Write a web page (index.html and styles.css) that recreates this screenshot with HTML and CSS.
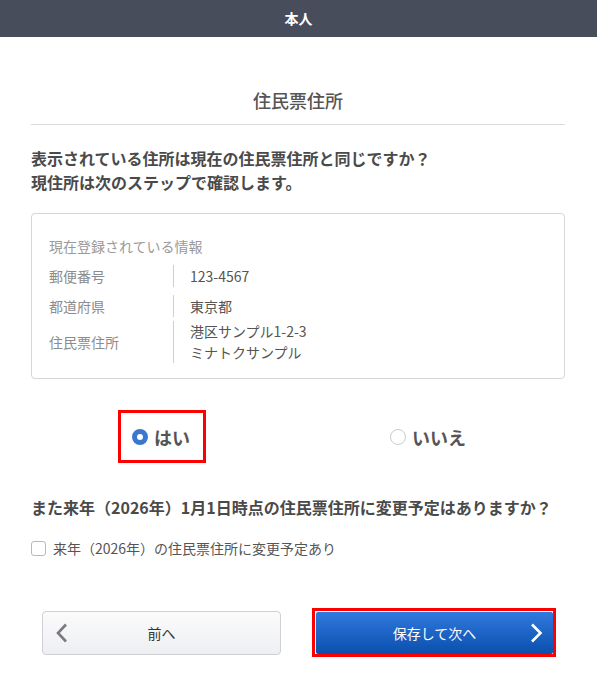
FILE: index.html
```html
<!DOCTYPE html>
<html lang="ja">
<head>
<meta charset="utf-8">
<title>住民票住所</title>
<link rel="stylesheet" href="styles.css">
</head>
<body>
<header class="topbar">本人</header>
<main class="page">
  <h1 class="title">住民票住所</h1>
  <p class="question">表示されている住所は現在の住民票住所と同じですか？<br>現住所は次のステップで確認します。</p>

  <section class="info-box">
    <p class="info-caption">現在登録されている情報</p>
    <dl class="info-list">
      <div class="info-row">
        <dt>郵便番号</dt>
        <dd>123-4567</dd>
      </div>
      <div class="info-row">
        <dt>都道府県</dt>
        <dd>東京都</dd>
      </div>
      <div class="info-row info-row--multi">
        <dt>住民票住所</dt>
        <dd>港区サンプル1-2-3<br>ミナトクサンプル</dd>
      </div>
    </dl>
  </section>

  <div class="choice-group">
    <label class="choice choice--marked">
      <span class="radio radio--on"></span>
      <span class="choice-text">はい</span>
    </label>
    <label class="choice">
      <span class="radio"></span>
      <span class="choice-text">いいえ</span>
    </label>
  </div>

  <p class="question question--second">また来年（2026年）1月1日時点の住民票住所に変更予定はありますか？</p>

  <label class="check">
    <span class="checkbox"></span>
    <span class="check-text">来年（2026年）の住民票住所に変更予定あり</span>
  </label>

  <div class="actions">
    <button class="btn btn--prev" type="button">
      <svg class="chev chev--left" width="12" height="20" viewBox="0 0 12 20"><polyline points="10,1.5 2,10 10,18.5" fill="none" stroke="#7a7a80" stroke-width="2.6" stroke-linejoin="miter"/></svg>
      <span class="btn-label">前へ</span>
    </button>
    <div class="mark-box">
      <button class="btn btn--next" type="button">
        <span class="btn-label">保存して次へ</span>
        <svg class="chev chev--right" width="13" height="20" viewBox="0 0 13 20"><polyline points="2,1.5 10.5,10 2,18.5" fill="none" stroke="#ffffff" stroke-width="2.6" stroke-linejoin="miter"/></svg>
      </button>
    </div>
  </div>
</main>
</body>
</html>
```

FILE: styles.css
```css
* {
  box-sizing: border-box;
}

body {
  margin: 0;
  background: #ffffff;
  font-family: "Noto Sans CJK JP", "Noto Sans", sans-serif;
  color: #4a4a4a;
}

.topbar {
  height: 37px;
  line-height: 37px;
  background: #474d5b;
  color: #ffffff;
  font-size: 14px;
  font-weight: 700;
  text-align: center;
}

.page {
  padding: 0 32px 0 31px;
}

.title {
  margin: 51px 0 0;
  padding-bottom: 12px;
  border-bottom: 1px solid #dcdcdc;
  font-size: 18px;
  line-height: 24px;
  font-weight: 500;
  color: #555555;
  text-align: center;
}

.question {
  margin: 21px 0 0;
  font-size: 16px;
  line-height: 24px;
  font-weight: 700;
  color: #4a4a4a;
}

.info-box {
  margin-top: 19px;
  border: 1px solid #d6d6d8;
  border-radius: 4px;
  padding: 22px 17px 15px;
}

.info-caption {
  margin: 0;
  font-size: 14px;
  line-height: 20px;
  color: #9a9a9a;
}

.info-list {
  margin: 9px 0 0;
}

.info-row {
  display: flex;
  align-items: center;
}

.info-row + .info-row {
  margin-top: 8px;
}

.info-row + .info-row--multi {
  margin-top: 4px;
}

.info-row dt {
  width: 124px;
  font-size: 14px;
  line-height: 22px;
  color: #8c8c8c;
}

.info-row dd {
  margin: 0;
  padding-left: 16px;
  border-left: 1px solid #cfcfcf;
  font-size: 14px;
  line-height: 22px;
  color: #555555;
}

.info-row--multi dd {
  line-height: 21px;
}

.choice-group {
  margin-top: 31px;
  display: grid;
  grid-template-columns: 262px 1fr;
  justify-items: center;
}

.choice {
  display: flex;
  align-items: center;
  gap: 6px;
  height: 53px;
  padding: 0 13px 0 11px;
  border: 3px solid transparent;
}

.choice--marked {
  border-color: #ff0000;
}

.radio {
  width: 16px;
  height: 16px;
  border-radius: 50%;
  border: 1px solid #c9cbcf;
  background: #ffffff;
}

.radio--on {
  border: 5px solid #3b77cf;
}

.choice-text {
  font-size: 18px;
  line-height: 24px;
  font-weight: 700;
  color: #555555;
}

.question--second {
  margin-top: 32px;
}

.check {
  margin-top: 19px;
  display: flex;
  align-items: center;
  gap: 7px;
}

.checkbox {
  width: 15px;
  height: 15px;
  border: 1px solid #b9b9bd;
  border-radius: 3px;
  background: #ffffff;
}

.check-text {
  font-size: 14px;
  line-height: 20px;
  color: #555555;
}

.actions {
  margin-top: 50px;
  padding: 0 9px 0 11px;
  display: grid;
  grid-template-columns: 239px 244px;
  justify-content: space-between;
  align-items: center;
}

.btn {
  width: 100%;
  height: 44px;
  display: grid;
  grid-template-columns: 40px 1fr 40px;
  align-items: center;
  padding: 0;
  font-family: inherit;
  font-size: 14px;
  cursor: pointer;
}

.btn-label {
  grid-column: 2;
  grid-row: 1;
  text-align: center;
}

.btn--prev {
  border: 1px solid #cfd0d4;
  border-radius: 4px;
  background: linear-gradient(#fbfbfc, #eeeff2);
  color: #333333;
}

.chev--left {
  grid-column: 1;
  grid-row: 1;
  margin-left: 13px;
}

.mark-box {
  border: 3px solid #ff0000;
  padding: 1px 0 0 1px;
}

.btn--next {
  height: 42px;
  border: none;
  border-radius: 2px;
  background: linear-gradient(#3079de, #0a4fad);
  color: #ffffff;
}

.chev--right {
  grid-column: 3;
  grid-row: 1;
  justify-self: end;
  margin-right: 10px;
}
```
